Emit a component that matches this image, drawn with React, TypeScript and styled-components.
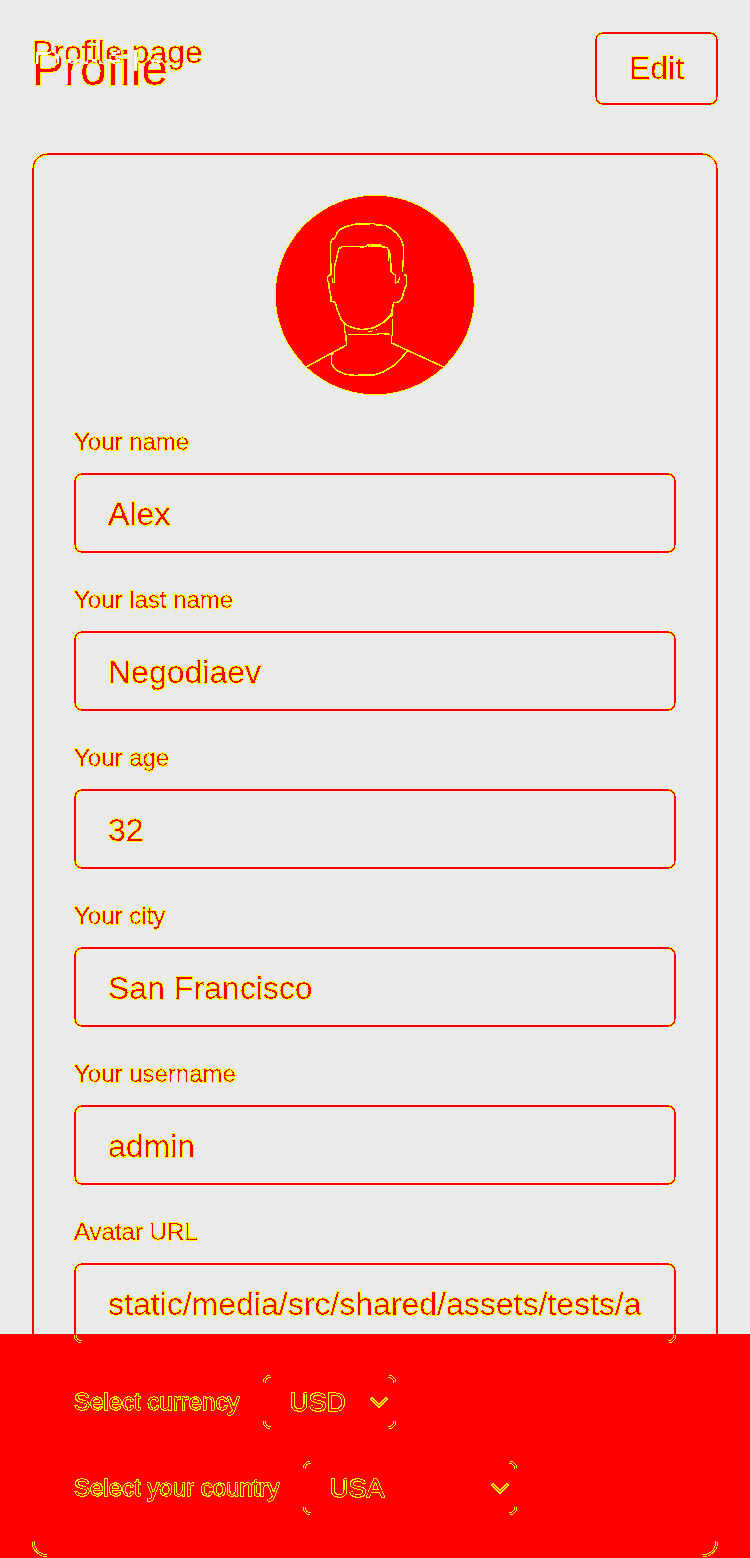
import React from 'react';
import styled, { createGlobalStyle } from 'styled-components';

const RED = '#ff0000';
const YELLOW = '#ffff00';
const FONT = '"Liberation Sans", Arial, sans-serif';

const Global = createGlobalStyle`
  * { box-sizing: border-box; }
  body { margin: 0; background: #eaeaea; }
`;

const Page = styled.main`
  width: 750px;
  height: 1558px;
  padding: 32px 32px 0;
  display: flex;
  flex-direction: column;
  gap: 48px;
  background: linear-gradient(#eaeaea 1334px, ${RED} 1334px);
  font-family: ${FONT};
  color: ${RED};
  -webkit-text-stroke: 0.7px ${RED};
  overflow: hidden;
`;

const Defs = styled.svg`
  position: absolute;
  width: 0;
  height: 0;
`;

const Header = styled.header`
  height: 73px;
  display: flex;
  justify-content: space-between;
  align-items: flex-start;
  position: relative;
`;

const Title = styled.h1`
  margin: 9px 0 0;
  font-size: 48px;
  line-height: 56px;
  font-weight: 400;
  filter: url(#edge);
`;

const PageLabel = styled.span`
  position: absolute;
  left: 0;
  top: 2px;
  font-size: 32px;
  line-height: 36px;
  filter: url(#edge);
`;

const Overlap = styled.svg`
  position: absolute;
  left: 0;
  top: 0;
  font-family: ${FONT};
  -webkit-text-stroke: 0;
`;

const EditButton = styled.button`
  width: 123px;
  height: 73px;
  padding: 0 0 2px;
  border: 2px solid ${RED};
  border-radius: 8px;
  background: transparent;
  color: ${RED};
  font: 400 32px/36px ${FONT};
  -webkit-text-stroke: 0.7px ${RED};
  filter: url(#edge);
`;

const Card = styled.section`
  width: 686px;
  height: 1404px;
  border: 2px solid ${RED};
  border-radius: 16px;
  padding: 40px;
  display: flex;
  flex-direction: column;
  gap: 32px;
  filter: url(#edge);
`;

const Avatar = styled.svg`
  display: block;
  align-self: center;
  flex: none;
`;

const Field = styled.label`
  display: flex;
  flex-direction: column;
  gap: 16px;
`;

const Label = styled.span`
  font-size: 24px;
  line-height: 30px;
  white-space: nowrap;
`;

const Input = styled.input`
  width: 602px;
  height: 80px;
  padding: 2px 32px 0;
  border: 2px solid ${RED};
  border-radius: 8px;
  background: transparent;
  color: ${RED};
  font: 400 32px/36px ${FONT};
  -webkit-text-stroke: 0.7px ${RED};
`;

const SelectRow = styled.div`
  display: flex;
  align-items: center;
  gap: 24px;
  height: 54px;
`;

const SelectBox = styled.div<{ $width: number }>`
  width: ${(p) => p.$width}px;
  height: 54px;
  padding: 0 6px 0 24px;
  border: 2px solid ${RED};
  border-radius: 8px;
  display: flex;
  align-items: center;
  justify-content: space-between;
  font-size: 26.667px;
`;

/* Keeps well covered pixels and turns partly covered ones yellow. */
function EdgeFilter() {
  return (
    <Defs aria-hidden="true">
      <filter id="edge" colorInterpolationFilters="sRGB">
        <feComponentTransfer in="SourceAlpha" result="core">
          <feFuncA type="discrete" tableValues="0 0 0 0 0 0 0 0 0 0 1" />
        </feComponentTransfer>
        <feFlood floodColor={RED} result="red" />
        <feComposite in="SourceGraphic" in2="red" operator="over" result="opaque" />
        <feComposite in="opaque" in2="core" operator="in" result="solid" />
        <feComponentTransfer in="SourceAlpha" result="any">
          <feFuncA type="discrete" tableValues="0 1 1 1 1 1 1 1 1 1 1 1 1 1 1 1 1 1 1 1 1 1 1 1 1" />
        </feComponentTransfer>
        <feFlood floodColor={YELLOW} result="yellow" />
        <feComposite in="yellow" in2="any" operator="in" result="rim" />
        <feMerge>
          <feMergeNode in="rim" />
          <feMergeNode in="solid" />
        </feMerge>
      </filter>
    </Defs>
  );
}

function Portrait() {
  return (
    <Avatar width="200" height="200" viewBox="30 30 600 600">
      <circle cx="330" cy="330" r="299" fill={RED} />
      <g fill="none" stroke={YELLOW} strokeWidth="4.6" shapeRendering="crispEdges">
        <path d="M198 268 L196 178 L200 165 L211 157 L216 143 L228 132 L247 123 L275 117 L326 116 L332 119 L362 122 L380 132 L397 147 L409 164 L415 182 L415 222 L412 262" />
        <path d="M208 292 L208 246 L214 224 L221 192 L230 185 L282 184 L288 187 L304 184 L308 179 L346 180 L349 185 L366 188 L374 200 L377 232 L379 262 L391 270 L392 294 L399 291 L405 277" />
        <path d="M304 181 L320 185 L346 183 M372 194 L371 228" />
        <path d="M200 268 L190 272 L187 280 L188 289 L192 295 L193 315 L197 328 L198 348 L211 352 L217 375 L228 402 L238 415" />
        <path d="M202 278 L202 292 L209 292" />
        <path d="M418 269 L424 272 L425 299 L417 316 L412 338 L401 351 L386 353 L382 370 L380 396 M382 402 L382 452 L379 454 L380 474" />
        <path d="M239 415 L244 420 L262 428 L290 434 L325 429 L355 413 L377 391 L377 384" />
        <path d="M239 415 L238 436 L242 447 L245 480 L123 546" />
        <path d="M249 449 L335 448 L348 445 L374 448" />
        <path d="M309 439 L320 439 L322 436 M332 433 L336 433" strokeWidth="3" />
        <path d="M380 474 L536 546" />
        <path d="M205 503 L199 510 L200 538 L216 557 L242 568 L270 571 L326 570 L356 560 L386 542 L410 518 L428 497" />
      </g>
    </Avatar>
  );
}

function Chevron() {
  return (
    <svg width="18" height="14" viewBox="0 0 18 14" fill="none">
      <path d="M1 3 L9 10.8 L17 3" stroke={YELLOW} strokeWidth="2.4" />
      <path d="M1.6 3.6 L9 10.8 L16.4 3.6" stroke={RED} strokeWidth="0.9" />
    </svg>
  );
}

const fields = [
  ['Your name', 'Alex'],
  ['Your last name', 'Negodiaev'],
  ['Your age', '32'],
  ['Your city', 'San Francisco'],
  ['Your username', 'admin'],
  ['Avatar URL', 'static/media/src/shared/assets/tests/avatar.jpg'],
];

export default function App() {
  return (
    <>
      <Global />
      <EdgeFilter />
      <Page>
        <Header>
          <Title>Profile</Title>
          <PageLabel>Profile page</PageLabel>
          <Overlap width="180" height="60" aria-hidden="true">
            <clipPath id="title-clip">
              <text x="0" y="53" fontSize="48">Profile</text>
            </clipPath>
            <text x="0" y="31" fontSize="32" fill="#ffffff" stroke="#ffffff" strokeWidth="1.6" clipPath="url(#title-clip)">Profile page</text>
          </Overlap>
          <EditButton>Edit</EditButton>
        </Header>
        <Card>
          <Portrait />
          {fields.map(([label, value]) => (
            <Field key={label}>
              <Label>{label}</Label>
              <Input defaultValue={value} readOnly />
            </Field>
          ))}
          <SelectRow>
            <Label>Select currency</Label>
            <SelectBox $width={133}>USD<Chevron /></SelectBox>
          </SelectRow>
          <SelectRow>
            <Label>Select your country</Label>
            <SelectBox $width={214}>USA<Chevron /></SelectBox>
          </SelectRow>
        </Card>
      </Page>
    </>
  );
}
